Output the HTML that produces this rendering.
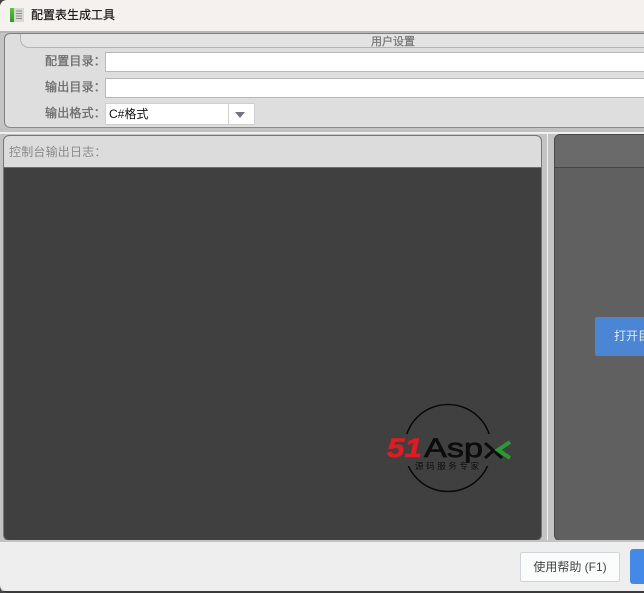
<!DOCTYPE html>
<html lang="zh-CN">
<head>
<meta charset="utf-8">
<title>配置表生成工具</title>
<style>
html,body{margin:0;padding:0;width:644px;height:593px;overflow:hidden;background:#444;}
*{box-sizing:border-box;font-family:"Liberation Sans","Noto Sans CJK SC",sans-serif;}
.a{position:absolute;}
#win{position:absolute;left:0;top:0;width:644px;height:593px;overflow:hidden;background:#c4c4c4;border-radius:7px 0 0 7px;}
#title{left:0;top:0;width:644px;height:31px;background:#f5f1ef;}
#ttext{left:31px;top:6px;font-size:12px;line-height:18px;color:#111;white-space:nowrap;-webkit-text-stroke:.15px #111;}
.lbl{left:45px;font-size:12px;line-height:16px;color:#707070;white-space:nowrap;letter-spacing:.2px;-webkit-text-stroke:.35px #707070;}
.inp{left:105px;width:560px;height:20px;background:#fff;border:1px solid #b9b9b9;}
</style>
</head>
<body>
<div id="win">
  <div class="a" id="title"></div>
  <svg class="a" style="left:10px;top:8px" width="15" height="15" viewBox="0 0 15 15">
    <defs><linearGradient id="g" x1="0" y1="0" x2="0" y2="1"><stop offset="0" stop-color="#58c83a"/><stop offset="1" stop-color="#2f9a22"/></linearGradient></defs>
    <rect x="0" y="0" width="4" height="14" fill="url(#g)"/>
    <rect x="4" y="0" width="10" height="14" fill="#d8d8d4"/>
    <path d="M6 3h6M6 5.5h6M6 8h6M6 10.5h6" stroke="#8d8d88" stroke-width="1"/>
  </svg>
  <div class="a" id="ttext">配置表生成工具</div>

  <div class="a" style="left:0;top:31px;width:644px;height:2px;background:#b8b5b3"></div>

  <!-- settings panel -->
  <div class="a" style="left:4px;top:33px;width:660px;height:95px;background:#dedede;border:1px solid #7f7f7f;border-right:0;border-radius:6px 0 0 6px;border-bottom:1px solid #8a8a8a"></div>
  <div class="a" style="left:20px;top:34px;width:640px;height:14px;background:#e3e3e3;border:1px solid #b4b4b4;border-top:0;border-right:0;border-radius:0 0 0 9px"></div>
  <div class="a" style="left:371px;top:35px;font-size:11px;line-height:14px;color:#777;white-space:nowrap;-webkit-text-stroke:.25px #777">用户设置</div>

  <div class="a lbl" style="top:53px">配置目录：</div>
  <div class="a inp" style="top:52px"></div>
  <div class="a lbl" style="top:79px">输出目录：</div>
  <div class="a inp" style="top:78px"></div>
  <div class="a lbl" style="top:105px">输出格式：</div>
  <div class="a" style="left:105px;top:103px;width:150px;height:22px;background:#fff;border:1px solid #cfcfcf"></div>
  <div class="a" style="left:109px;top:106px;font-size:12px;line-height:16px;color:#111;white-space:nowrap">C#格式</div>
  <div class="a" style="left:228px;top:104px;width:1px;height:20px;background:#cfcfcf"></div>
  <div class="a" style="left:235px;top:112px;width:0;height:0;border-left:5px solid transparent;border-right:5px solid transparent;border-top:6px solid #6f7480"></div>

  <!-- white separator line -->
  <div class="a" style="left:0;top:128px;width:644px;height:4px;background:#c2c2c2"></div>
  <div class="a" style="left:0;top:132px;width:644px;height:2px;background:#f0f0f0"></div>
  <div class="a" style="left:0;top:134px;width:4px;height:406px;background:#c2c2c2"></div>
  <div class="a" style="left:547px;top:132px;width:1px;height:408px;background:#f0f0f0"></div>

  <!-- left console panel -->
  <div class="a" style="left:3px;top:135px;width:539px;height:406px;background:#404040;border:1px solid #777;border-radius:6px;overflow:hidden">
    <div class="a" style="left:0;top:0;width:537px;height:32px;background:#dcdcdc;border-bottom:1px solid #6e6e6e"></div>
    <div class="a" style="left:5px;top:8px;font-size:12px;line-height:16px;color:#8b8b8b;white-space:nowrap;letter-spacing:.2px">控制台输出日志：</div>
  </div>

  <!-- right panel -->
  <div class="a" style="left:554px;top:134px;width:120px;height:407px;background:#606060;border:1px solid #4a4a4a;border-radius:6px 0 0 6px;overflow:hidden">
    <div class="a" style="left:0;top:0;width:120px;height:33px;background:#6a6a6a;border-bottom:1px solid #454545"></div>
  </div>
  <div class="a" style="left:595px;top:317px;width:70px;height:39px;background:#4a86d4;border-radius:2px 0 0 2px;overflow:hidden">
    <div class="a" style="left:19px;top:11px;font-size:12px;line-height:16px;color:#dfe9f6;white-space:nowrap">打开目录</div>
  </div>

  <!-- watermark -->
  <svg class="a" style="left:380px;top:395px" width="140" height="105" viewBox="0 0 140 105">
    <circle cx="68" cy="53" r="43.5" fill="none" stroke="#0b0b0b" stroke-width="1.6"/>
    <rect x="5" y="39" width="126" height="32" fill="#404040"/>
    <text x="7" y="62" font-family="Liberation Sans, sans-serif" font-size="27" font-weight="700" font-style="italic" fill="#e01b22" stroke="#e01b22" stroke-width=".6" textLength="35" lengthAdjust="spacingAndGlyphs">51</text>
    <text x="44" y="62" font-family="Liberation Sans, sans-serif" font-size="27" fill="#0c0c0c" stroke="#0c0c0c" stroke-width=".7" textLength="59" lengthAdjust="spacingAndGlyphs">Asp</text>
    <path d="M105 48L122 63M105 63L113 56" stroke="#0c0c0c" stroke-width="3" fill="none"/>
    <path d="M130 47L118 55L130 63" stroke="#2a9a35" stroke-width="4" fill="none"/>
    <text x="35" y="74" font-family="Noto Sans CJK SC, sans-serif" font-size="8.5" fill="#111" textLength="64" lengthAdjust="spacing">源码服务专家</text>
  </svg>

  <!-- bottom bar -->
  <div class="a" style="left:0;top:540px;width:644px;height:3px;background:#c2c2c2"></div>
  <div class="a" style="left:0;top:542px;width:644px;height:49px;background:#eeeeee;border-radius:0 0 0 7px"></div>
  <div class="a" style="left:0;top:591px;width:644px;height:2px;background:#3a3a3a"></div>
  <div class="a" style="left:520px;top:552px;width:100px;height:30px;background:#fbfcfc;border:1px solid #cfd4d8;border-radius:2px;font-size:12px;line-height:28px;color:#444;text-align:center;white-space:nowrap">使用帮助 (F1)</div>
  <div class="a" style="left:630px;top:549px;width:30px;height:35px;background:#4289e8;border-radius:3px 0 0 3px"></div>
</div>
</body>
</html>
